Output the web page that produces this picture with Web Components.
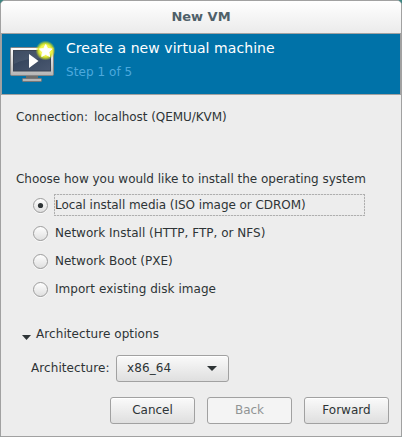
<!DOCTYPE html>
<html lang="en"><head><meta charset="utf-8"><title>New VM</title>
<style>
html,body{margin:0;width:402px;height:437px;overflow:hidden;background:#3d8581}
body{font:12px/16px "DejaVu Sans",sans-serif;color:#2e3436}
</style></head><body>
<vm-window heading="New VM">
  <vm-banner heading="Create a new virtual machine" step="Step 1 of 5"></vm-banner>
  <vm-connection></vm-connection>
  <vm-install>
    <vm-radio checked style="letter-spacing:-.05px">Local install media (ISO image or CDROM)</vm-radio>
    <vm-radio style="letter-spacing:.015px">Network Install (HTTP, FTP, or NFS)</vm-radio>
    <vm-radio>Network Boot (PXE)</vm-radio>
    <vm-radio style="letter-spacing:.04px">Import existing disk image</vm-radio>
  </vm-install>
  <vm-options></vm-options>
  <vm-button slot="actions">Cancel</vm-button>
  <vm-button slot="actions" disabled>Back</vm-button>
  <vm-button slot="actions">Forward</vm-button>
</vm-window>
<script>
const define=(name,render)=>customElements.define(name,class extends HTMLElement{
  constructor(){super();this.attachShadow({mode:"open"}).innerHTML=render(this);}
});
define("vm-window",e=>`<style>
:host{display:flex;flex-direction:column;box-sizing:border-box;width:402px;height:437px;border:1px solid #a1a1a1;border-radius:5px 5px 0 0;background:#ededed;overflow:hidden}
header{box-sizing:border-box;height:32px;flex:none;background:linear-gradient(#fff,#ebebeb);text-align:center;font-size:13px;line-height:32px;font-weight:bold;color:#4f6069}
main{flex:1}
footer{display:flex;justify-content:flex-end;gap:12px;padding:0 12px 12px}
</style><header>${e.getAttribute("heading")}</header><main><slot></slot></main><footer><slot name="actions"></slot></footer>`);
define("vm-banner",e=>`<style>
:host{display:flex;box-sizing:border-box;height:62px;border:1px solid #a1a1a1;background:#0072a8;padding:5px 0 0 6px}
svg{flex:none;width:48px;height:48px}
div{margin-left:10px}
h1{margin:0;font-size:14px;line-height:18px;font-weight:normal;letter-spacing:.07px;color:#fff;white-space:nowrap}
p{margin:7px 0 0;line-height:16px;letter-spacing:.06px;color:#4da9dd}
</style><svg viewBox="0 0 48 48">
<defs><linearGradient id="f" x2="0" y2="1"><stop stop-color="#fff"/><stop offset="1" stop-color="#b4b4b4"/></linearGradient>
<linearGradient id="s" x2="1" y2="1"><stop stop-color="#2c3d55"/><stop offset="1" stop-color="#4a5870"/></linearGradient>
<radialGradient id="g"><stop offset=".55" stop-color="#f2f650"/><stop offset=".72" stop-color="#dbe81e" stop-opacity=".85"/><stop offset="1" stop-color="#c5dc1b" stop-opacity="0"/></radialGradient></defs>
<path d="M18 36h12v4H18z" fill="#6d6d6b"/><rect x="14.5" y="39.5" width="19" height="3" rx=".7" fill="#b5b5b5" stroke="#777"/>
<rect x="2.5" y="8.5" width="43" height="28" rx="1.2" fill="url(#f)" stroke="#858585"/>
<rect x="5.5" y="11.5" width="37" height="20.5" fill="url(#s)" stroke="#3b4452"/>
<path d="M6 12h36v8Q20 18 6 25z" fill="#fff" opacity=".08"/>
<path d="M21 15v14l9.5-7z" fill="#fff"/>
<circle cx="37.5" cy="11.5" r="10" fill="url(#g)"/>
<path d="M37.7 5.5l2 4 4.3.5-3.1 3.1.8 4.4-4-2.1-4 2.1.8-4.4-3.1-3.1 4.3-.5z" fill="#fff" stroke="#fff" stroke-width=".9" stroke-linejoin="round"/>
</svg><div><h1>${e.getAttribute("heading")}</h1><p>${e.getAttribute("step")}</p></div>`);
define("vm-connection",()=>`<style>
:host{display:flex;gap:6px;padding:14px 15px 0}
span+span{letter-spacing:-.05px}
</style><span>Connection:</span><span>localhost (QEMU/KVM)</span>`);
define("vm-install",()=>`<style>
:host{display:block;padding:46px 15px 0;white-space:nowrap}
.title{letter-spacing:-.015px}
.list{display:grid;gap:6px;padding:7px 0 0 17px;width:332px}
</style><div class="title">Choose how you would like to install the operating system</div><div class="list"><slot></slot></div>`);
define("vm-radio",e=>`<style>
:host{display:flex;align-items:center;height:22px;gap:6px}
svg{flex:none;width:15px;height:17px}
span{flex:1;box-sizing:border-box;height:22px;line-height:20px;padding:1px;padding-block:1px;white-space:nowrap}
:host([checked]) span{--h:repeating-linear-gradient(90deg,#afafaf 0 2px,#dedede 2px 3px);--v:repeating-linear-gradient(#afafaf 0 2px,#dedede 2px 3px);background:var(--h) top/100% 1px no-repeat,var(--h) bottom/100% 1px no-repeat,var(--v) left/1px 100% no-repeat,var(--v) right/1px 100% no-repeat}
</style><svg viewBox="0 0 15 17"><defs><linearGradient id="r" x2="0" y2="1"><stop stop-color="#fff"/><stop offset="1" stop-color="#dedede"/></linearGradient></defs>
<circle cx="7.5" cy="9.5" r="7" fill="none" stroke="#fff" opacity=".8"/><circle cx="7.5" cy="8.5" r="7" fill="url(#r)" stroke="#9b9b9b"/>${e.hasAttribute("checked")?'<circle cx="7.5" cy="8.5" r="2.6" fill="#2e3436"/>':""}</svg><span><slot></slot></span>`);
define("vm-options",()=>`<style>
:host{display:block;padding:26px 15px 0}
.top{display:flex;gap:5px;padding-left:6px;letter-spacing:.075px}.top svg{margin-top:9px}
.row{display:flex;align-items:center;gap:6px;padding:13px 0 0 15px}
.label{width:79px;letter-spacing:.08px;padding-bottom:2px}
.select{box-sizing:border-box;display:flex;justify-content:space-between;align-items:center;width:113px;height:27px;padding:0 11px 2px 10px;border:1px solid #a1a1a1;border-radius:3px;background:linear-gradient(#fafafa,#dfdfdf);box-shadow:inset 0 1px #fff;letter-spacing:.1px}
.select svg{margin-top:2px}
</style><div class="top"><svg width="9" height="5"><path d="M0 0h9L4.5 5z" fill="#2e3436"/></svg><span>Architecture options</span></div>
<div class="row"><span class="label">Architecture:</span><div class="select"><span>x86_64</span><svg width="10" height="5"><path d="M0 0h10L5 5z" fill="#2e3436"/></svg></div></div>`);
define("vm-button",()=>`<style>
:host{box-sizing:border-box;width:85px;height:27px;border:1px solid #a1a1a1;border-radius:3px;background:linear-gradient(#fafafa,#dfdfdf);box-shadow:inset 0 1px #fff;text-align:center;line-height:24px}
:host([disabled]){background:#f4f4f4;color:#919494;box-shadow:none}
</style><slot></slot>`);
</script></body></html>
